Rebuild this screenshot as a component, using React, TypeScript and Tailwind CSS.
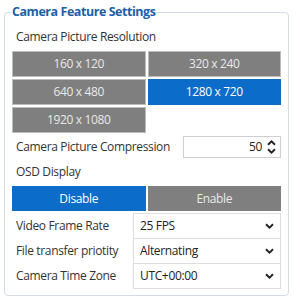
import React from "react";

const resolutions = ["160 x 120", "320 x 240", "640 x 480", "1280 x 720", "1920 x 1080"];
const selected = "1280 x 720";

const Chevron = ({ up = false }: { up?: boolean }) => (
  <svg width="9" height="6" viewBox="0 0 9 6" className={up ? "rotate-180" : ""}>
    <path d="M1 1.2 L4.5 4.6 L8 1.2" fill="none" stroke="#222" strokeWidth="1.9" />
  </svg>
);

const SelectRow = ({ label, value, first }: { label: string; value: string; first?: boolean }) => (
  <div className={"flex items-stretch h-[26px] " + (first ? "" : "-mt-px")}>
    <div className="w-[121px] pl-1 flex items-center text-[#333] shrink-0">{label}</div>
    <div className="flex-1 flex items-center justify-between border border-[#dedede] pl-[6px] pr-[6px] text-[#222]">
      <span>{value}</span>
      <Chevron />
    </div>
  </div>
);

export default function App() {
  return (
    <div className="w-[300px] h-[305px] bg-white pt-[2px] pl-[4px] text-[12px] tracking-[-0.35px] font-['Open_Sans',sans-serif]">
      <fieldset className="w-[285px] border border-[#d6dce4] rounded-[4px] px-[7px] pb-[6px]">
        <legend className="-ml-[1px] px-[1px] text-[12.5px] leading-[20px] tracking-[-0.45px] font-bold text-[#1c5fa8]">
          Camera Feature Settings
        </legend>

        <div className="h-[29px] pl-1 flex items-center pt-[1px] text-[#333]">Camera Picture Resolution</div>
        <div className="grid grid-cols-2 gap-[2px]">
          {resolutions.map((r) => (
            <div
              key={r}
              className={
                "h-[26px] flex items-center justify-center border " +
                (r === selected
                  ? "bg-[#0b6cc9] border-[#0b6cc9] text-white"
                  : "bg-[#7f7f7f] border-[#bcbcbc] text-[#e9e9e9]")
              }
            >
              {r}
            </div>
          ))}
        </div>

        <div className="mt-[3px] h-[22px] flex items-center justify-between">
          <span className="pl-1 text-[#333]">Camera Picture Compression</span>
          <div className="w-[98px] h-[22px] border border-[#cfcfcf] flex items-center justify-end pr-[4px] gap-[5px] text-[#222]">
            <span>50</span>
            <div className="flex flex-col gap-[2px]">
              <Chevron up />
              <Chevron />
            </div>
          </div>
        </div>

        <div className="h-[28px] pl-1 flex items-center text-[#333]">OSD Display</div>
        <div className="grid grid-cols-2 gap-[2px]">
          <div className="h-[25px] flex items-center justify-center bg-[#0b6cc9] text-white">Disable</div>
          <div className="h-[25px] flex items-center justify-center bg-[#7f7f7f] text-[#e9e9e9]">Enable</div>
        </div>

        <div className="mt-[2px]">
          <SelectRow label="Video Frame Rate" value="25 FPS" first />
          <SelectRow label="File transfer priotity" value="Alternating" />
          <SelectRow label="Camera Time Zone" value="UTC+00:00" />
        </div>
      </fieldset>
    </div>
  );
}
